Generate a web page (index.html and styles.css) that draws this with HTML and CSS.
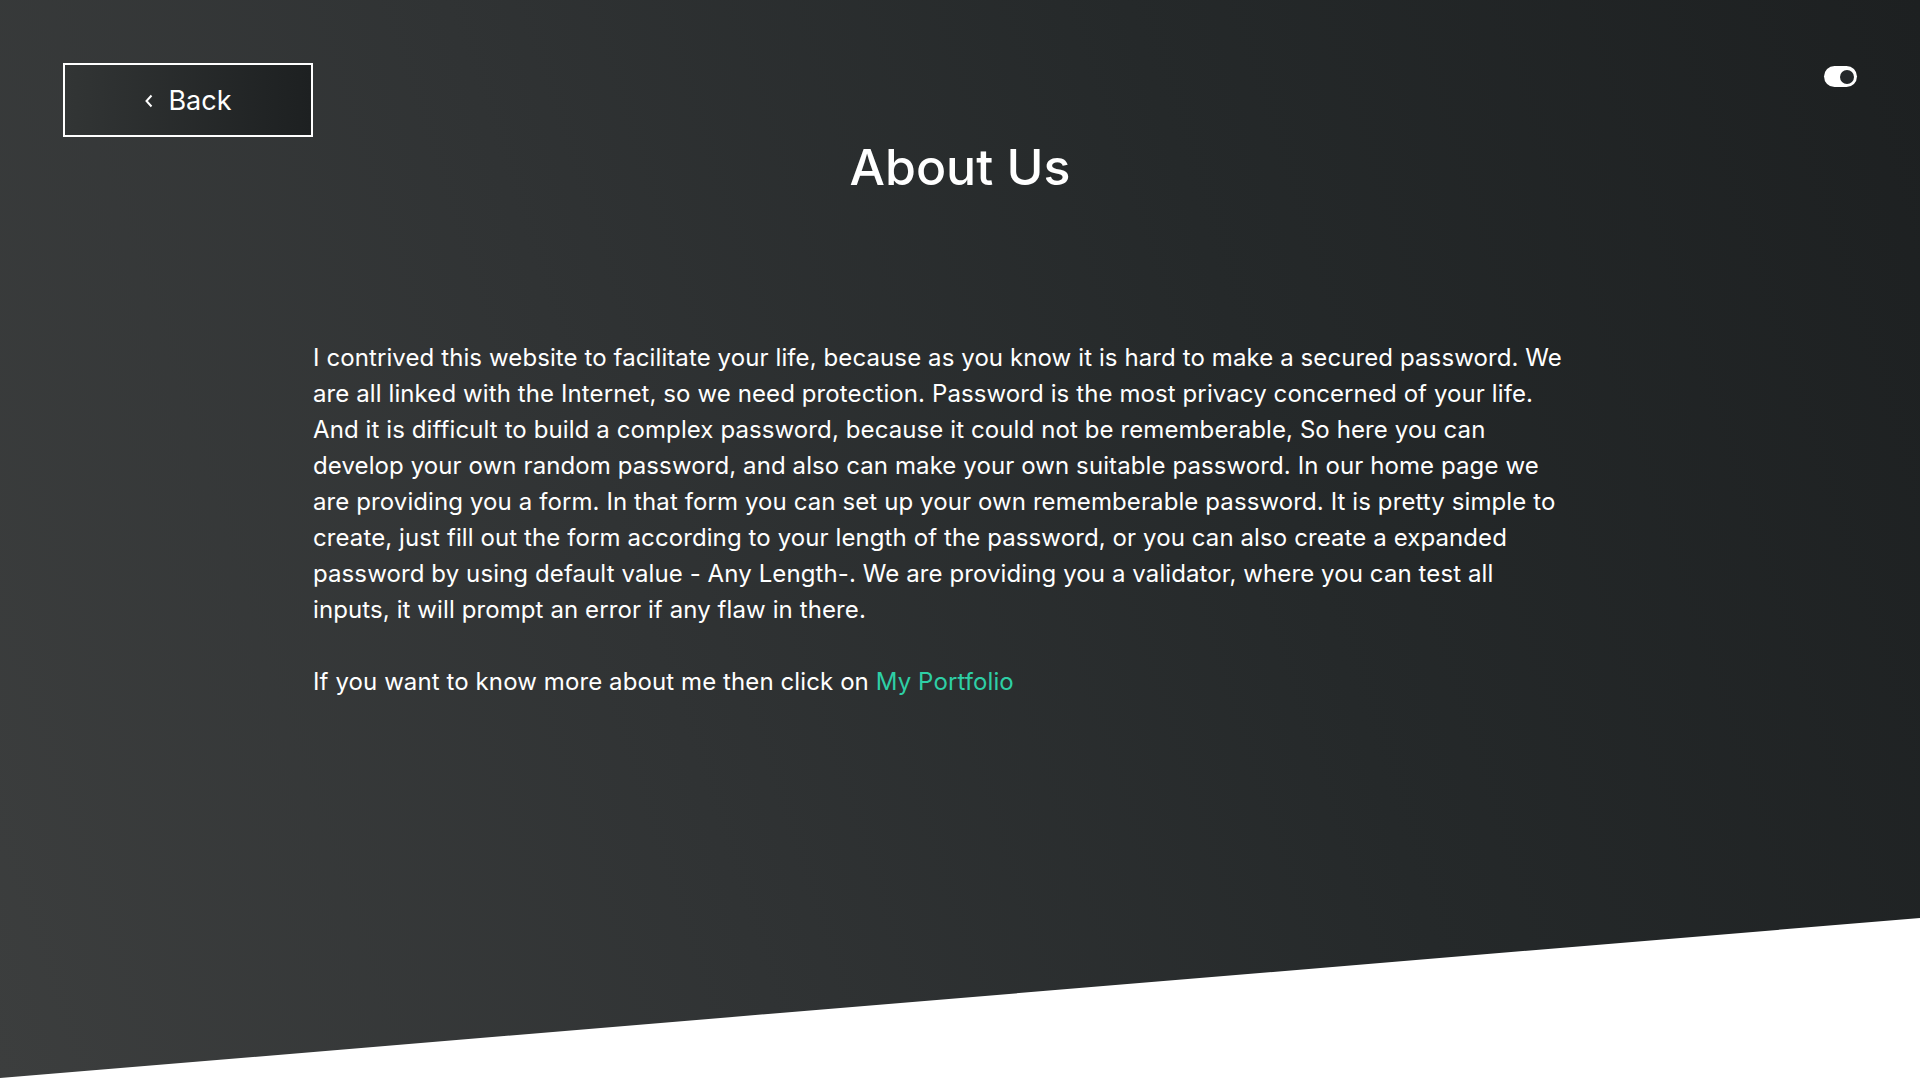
FILE: index.html
```html
<!DOCTYPE html>
<html lang="en">
<head>
<meta charset="utf-8">
<title>About Us</title>
<link rel="stylesheet" href="styles.css">
</head>
<body>
<div class="page">
  <header class="topbar">
    <a class="back-btn" href="#">
      <svg class="chev" width="10" height="16" viewBox="0 0 10 16"><polyline points="7.5,2.5 2.5,8 7.5,13.5" fill="none" stroke="#fff" stroke-width="2"/></svg>
      <span>Back</span>
    </a>
    <div class="toggle"><span class="knob"></span></div>
  </header>
  <h1 class="title">About Us</h1>
  <main class="content">
    <p class="text">I contrived this website to facilitate your life, because as you know it is hard to make a secured password. We are all linked with the Internet, so we need protection. Password is the most privacy concerned of your life. And it is difficult to build a complex password, because it could not be rememberable, So here you can develop your own random password, and also can make your own suitable password. In our home page we are providing you a form. In that form you can set up your own rememberable password. It is pretty simple to create, just fill out the form according to your length of the password, or you can also create a expanded password by using default value - Any Length-. We are providing you a validator, where you can test all inputs, it will prompt an error if any flaw in there.</p>
    <p class="text">If you want to know more about me then click on <a class="link" href="#">My Portfolio</a></p>
  </main>
</div>
<div class="slant"></div>
</body>
</html>
```
FILE: styles.css
```css
html, body {
  margin: 0;
  height: 100%;
}
body {
  background: linear-gradient(72deg, #3c3e3e 0%, #303334 35%, #25292a 65%, #1d2021 100%);
  font-family: Inter, "Open Sans", sans-serif;
  color: #fff;
  overflow: hidden;
  position: relative;
}
.page {
  padding: 63px 63px 0 63px;
}
.topbar {
  display: flex;
  justify-content: space-between;
  align-items: flex-start;
}
.back-btn {
  box-sizing: border-box;
  width: 250px;
  height: 74px;
  border: 2px solid #fff;
  display: flex;
  align-items: center;
  justify-content: center;
  gap: 14px;
  color: #fff;
  text-decoration: none;
  font-size: 27px;
  background: linear-gradient(90deg, #323535 0%, #1d2021 100%);
}
.back-btn .chev {
  margin-top: 2px;
}
.toggle {
  margin-top: 3px;
  width: 33px;
  height: 21px;
  border-radius: 11px;
  background: #fff;
  display: flex;
  align-items: center;
  justify-content: flex-end;
  padding-right: 3px;
  box-sizing: border-box;
}
.knob {
  width: 14px;
  height: 14px;
  border-radius: 50%;
  background: #23272a;
}
.title {
  margin: 0;
  text-align: center;
  font-size: 50px;
  line-height: 60px;
  font-weight: 500;
}
.content {
  margin: 143px 0 0 250px;
  width: 1262px;
}
.text {
  margin: 0 0 36px 0;
  font-size: 24px;
  line-height: 36px;
  letter-spacing: 0.1px;
}
.link {
  color: #2ecfa6;
  text-decoration: none;
}
.slant {
  position: absolute;
  left: 0;
  bottom: 0;
  width: 100%;
  height: 162px;
  background: #fff;
  clip-path: polygon(0 98.8%, 100% 0, 100% 100%, 0 100%);
}
```
